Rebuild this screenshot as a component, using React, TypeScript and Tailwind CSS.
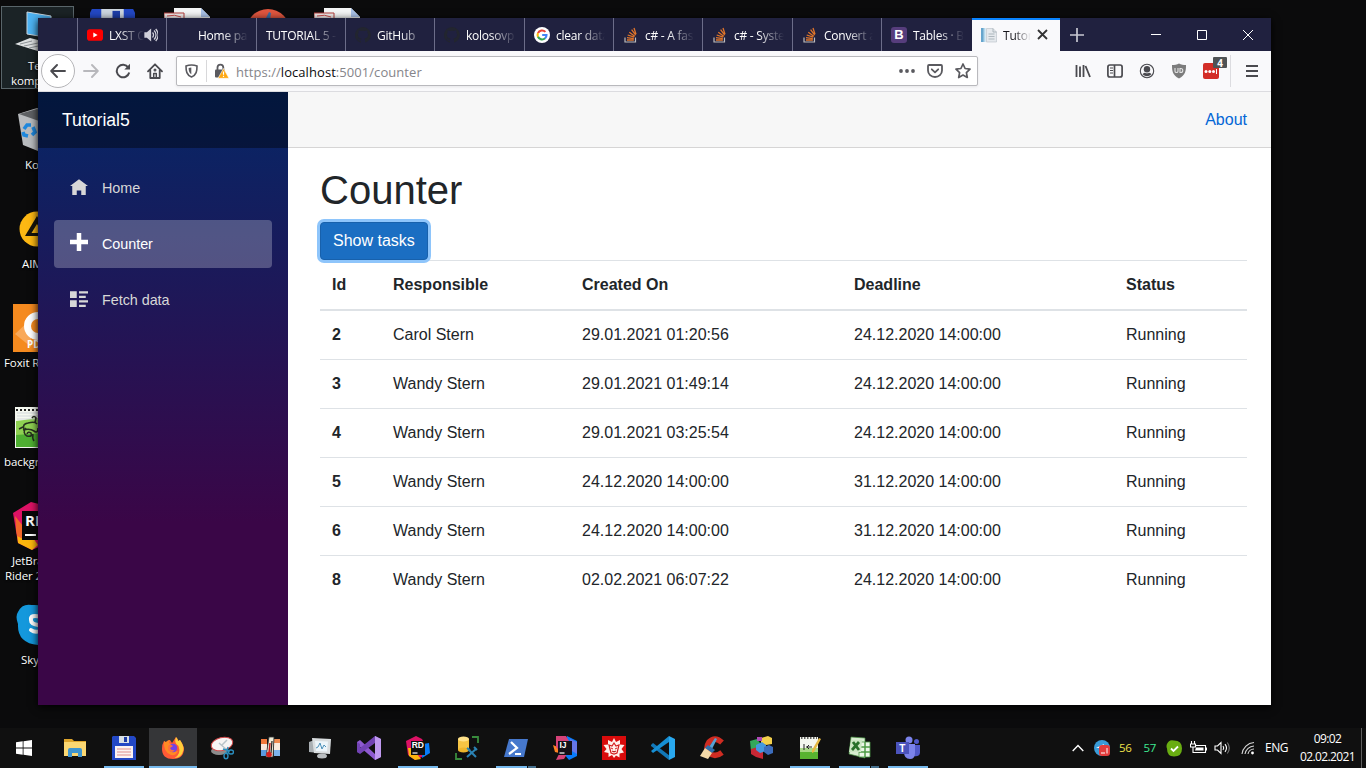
import type { ReactNode } from "react";

const UI = "font-['Open_Sans','Noto_Sans',sans-serif]";

/* ---------- Browser tabs ---------- */

function StackIcon() {
  return (
    <svg width="16" height="16" viewBox="0 0 16 16" fill="none">
      <path d="M2 10.5V15h10.5v-4.5" stroke="#bcbbbb" strokeWidth="1.2" />
      <path d="M4 13h6.800M4 10.700l6.800.9M4.700 8l6.500 2.200M6.300 5.200l5.500 4M8.600 2.700l4.100 5.500M11 1l2 6.300" stroke="#e0752a" strokeWidth="1.300" />
    </svg>
  );
}

function YouTubeIcon() {
  return (
    <svg width="16" height="16" viewBox="0 0 16 16">
      <rect y="2.3" width="16" height="11.4" rx="2.8" fill="#f00" />
      <path d="M6.3 5.5v5l4.3-2.5z" fill="#fff" />
    </svg>
  );
}

function GoogleIcon() {
  return (
    <svg width="16" height="16" viewBox="0 0 16 16" fill="none" strokeWidth="2.1">
      <circle cx="8" cy="8" r="8" fill="#fff" />
      <path d="M11.4 4.9A4.5 4.5 0 0 0 4 6.2" stroke="#ea4335" />
      <path d="M4 6.1a4.5 4.5 0 0 0 0 3.8" stroke="#fbbc05" />
      <path d="M4 9.8a4.5 4.5 0 0 0 7.1 1.5" stroke="#34a853" />
      <path d="M11 11.4A4.4 4.4 0 0 0 12.5 8H8.2" stroke="#4285f4" />
    </svg>
  );
}

function BootstrapIcon() {
  return (
    <span className="flex size-4 items-center justify-center rounded-[3px] bg-[#563d7c] font-['Liberation_Sans',sans-serif] text-[13px] leading-none font-bold text-white">
      B
    </span>
  );
}

function GitHubIcon() {
  return (
    <svg width="16" height="16" viewBox="0 0 16 16">
      <path
        fill="#22252f"
        d="M8 0a8 8 0 0 0-2.5 15.6c.4.1.5-.2.5-.4v-1.4c-2.2.5-2.7-1-2.7-1-.4-.9-.9-1.2-.9-1.2-.7-.5.1-.5.1-.5.8.1 1.2.8 1.2.8.7 1.3 1.9.9 2.3.7.1-.5.3-.9.5-1.1-1.8-.2-3.6-.9-3.6-4 0-.9.3-1.6.8-2.1-.1-.2-.4-1 .1-2.1 0 0 .7-.2 2.2.8a7.600 7.600 0 0 1 4 0c1.500-1 2.200-.8 2.200-.8.4 1.100.2 1.900.1 2.100.5.6.8 1.300.8 2.100 0 3.100-1.900 3.700-3.700 3.900.3.300.6.800.6 1.500v2.200c0 .2.1.500.6.400A8 8 0 0 0 8 0z"
      />
    </svg>
  );
}

function DocIcon() {
  return (
    <svg width="16" height="16" viewBox="0 0 16 16" className="shrink-0">
      <path d="M0 1h4v14H0z" fill="#66a5cd" />
      <path d="M2.500 1h2v14h-2z" fill="#b6d8ea" />
      <path d="M5.500 1.500H12L15.500 5v10H5.500z" fill="#e5e9ed" stroke="#bfc6cd" strokeWidth=".7" />
      <path d="M12 1.500V5h3.500M7.500 7h6M7.500 9.500h6M7.500 12h6" stroke="#a0a9b1" strokeWidth=".8" fill="none" />
    </svg>
  );
}

type TabData = { title: string; icon?: ReactNode; sound?: boolean; width: string };

const tabs: TabData[] = [
  { title: "LXST C", icon: <YouTubeIcon />, sound: true, width: "w-[89px]" },
  { title: "Home pa", icon: <span className="size-4" />, width: "w-[90px]" },
  { title: "TUTORIAL 5 -", width: "w-[89px]" },
  { title: "GitHub", icon: <GitHubIcon />, width: "w-[89px]" },
  { title: "kolosovp", icon: <GitHubIcon />, width: "w-[90px]" },
  { title: "clear data", icon: <GoogleIcon />, width: "w-[89px]" },
  { title: "c# - A fas", icon: <StackIcon />, width: "w-[89px]" },
  { title: "c# - Syste", icon: <StackIcon />, width: "w-[90px]" },
  { title: "Convert a", icon: <StackIcon />, width: "w-[89px]" },
  { title: "Tables · B", icon: <BootstrapIcon />, width: "w-[91px]" },
];

function Tab({ title, icon, sound, width }: TabData) {
  return (
    <div className={`flex h-full shrink-0 items-center border-l border-[#6c6d89] pr-2 pl-[9px] ${width}`}>
      {icon && <span className="mr-1.5 flex size-4 shrink-0">{icon}</span>}
      <span className="mt-0.5 min-w-0 flex-1 overflow-hidden [mask-image:linear-gradient(90deg,#000_calc(100%-26px),transparent_100%)] text-[12px] leading-4 tracking-[-0.25px] whitespace-nowrap text-white">
        {title}
      </span>
      {sound && (
        <svg width="14" height="14" viewBox="0 0 14 14" fill="none" stroke="#d0d0da" strokeWidth="1.300" className="shrink-0">
          <path d="M1 5h2l3.500-3v10L3 9H1z" fill="#d0d0da" />
          <path d="M8.500 4.500a3.500 3.500 0 0 1 0 5M10 2.500a6 6 0 0 1 0 9M11.700 1a8.500 8.500 0 0 1 0 12" />
        </svg>
      )}
    </div>
  );
}

function TabBar() {
  return (
    <div className="flex h-[33px] bg-[#20213f]">
      <div className="w-[39px] shrink-0" />
      {tabs.map((t) => (
        <Tab key={t.title} {...t} />
      ))}
      <div className="flex w-[88px] shrink-0 items-center bg-[#f9f9fb] pr-[12px] pl-[9px] shadow-[inset_0_2px_0_#0a84ff]">
        <DocIcon />
        <span className="mt-0.5 ml-[6px] min-w-0 flex-1 overflow-hidden [mask-image:linear-gradient(90deg,#000_40%,transparent_100%)] text-[12px] leading-4 tracking-[-0.2px] whitespace-nowrap text-[#15141a]">
          Tutor
        </span>
        <svg width="11" height="11" viewBox="0 0 11 11" stroke="#333" strokeWidth="1.800" className="ml-1.5 shrink-0">
          <path d="M1 1l9 9M10 1l-9 9" />
        </svg>
      </div>
      <div className="flex flex-1 items-center pl-[10px] text-white">
        <svg width="14" height="14" viewBox="0 0 14 14" stroke="#c8c8d2" strokeWidth="1.700">
          <path d="M7 0v14M0 7h14" />
        </svg>
        <div className="ml-auto flex items-center gap-9 pr-[18px]">
          <svg width="10" height="10" viewBox="0 0 10 10" stroke="currentColor"><path d="M0 4.500h10" /></svg>
          <svg width="10" height="10" viewBox="0 0 10 10" stroke="currentColor" fill="none"><path d="M.5.5h9v9h-9z" /></svg>
          <svg width="10" height="10" viewBox="0 0 10 10" stroke="currentColor"><path d="M0 0l10 10M10 0L0 10" /></svg>
        </div>
      </div>
    </div>
  );
}

/* ---------- Browser toolbar ---------- */

function Toolbar() {
  return (
    <div className="flex h-[41px] items-center border-b border-[#dcdce0] bg-[#f9f9fb] text-[#4a4a4f]">
      <span className="ml-[3px] flex size-[34px] shrink-0 items-center justify-center rounded-full border border-[#b5b5b8] bg-white">
        <svg width="16" height="16" viewBox="0 0 16 16" fill="none" stroke="currentColor" strokeWidth="1.900" strokeLinecap="round" strokeLinejoin="round">
          <path d="M15 8H1.500M7 2L1.200 8 7 14" />
        </svg>
      </span>
      <svg width="16" height="16" viewBox="0 0 16 16" className="ml-[8px] shrink-0" fill="none" stroke="#b8b8bc" strokeWidth="1.900" strokeLinecap="round" strokeLinejoin="round">
        <path d="M1 8h13.500M9 2l5.800 6L9 14" />
      </svg>
      <svg width="16" height="16" viewBox="0 0 16 16" className="ml-4 shrink-0" fill="none" stroke="currentColor" strokeWidth="2">
        <path d="M13.300 4.500A6.300 6.300 0 1 0 14.200 9.500" />
        <path d="M15 .8v5.700H9.300z" fill="currentColor" stroke="none" />
      </svg>
      <svg width="16" height="16" viewBox="0 0 16 16" className="ml-4 shrink-0" fill="none" stroke="currentColor" strokeWidth="1.800" strokeLinejoin="round" strokeLinecap="round">
        <path d="M1 8.300L8 1.300l7 7M3.300 7.500V15h9.400V7.500" />
        <path d="M6.700 15v-4.500h2.600V15" strokeWidth="1.500" />
        <circle cx="8" cy="7" r=".6" />
      </svg>
      <div className="ml-[13px] flex h-[30px] w-[802px] shrink-0 items-center rounded-[2px] border border-[#b9b9bd] bg-white pl-2 shadow-[0_1px_3px_rgba(0,0,0,0.08)]">
        <svg width="13" height="14" viewBox="0 0 13 14" fill="none" stroke="#5a5a5f" strokeWidth="1.600">
          <path d="M6.500 1C8.500 1 10.500 1.400 12 2c0 5-.5 9-5.500 11C1.500 11 1 7 1 2c1.500-.6 3.500-1 5.500-1z" />
          <path d="M6.300 3.500v6.800c-1.800-1.300-2.600-3-2.700-6.300z" fill="#5a5a5f" stroke="none" />
        </svg>
        <span className="ml-[8px] h-[22px] w-px bg-[#d8d8da]" />
        <svg width="16" height="16" viewBox="0 0 16 16" className="ml-[6px]">
          <path d="M4.500 7V4.600a2.900 2.900 0 0 1 5.800 0V7" fill="none" stroke="#5a5a5f" strokeWidth="1.800" />
          <rect x="2" y="6.500" width="10" height="8" rx="1" fill="#5a5a5f" />
          <path d="M10.500 5.500L16 15.300H5z" fill="#ffa70f" stroke="#fff" strokeWidth=".6" />
          <path d="M10.500 8.500v3.300M10.500 12.800v1.200" stroke="#fff" strokeWidth="1.200" />
        </svg>
        <span className="mt-[3px] ml-[7px] text-[13px] tracking-[0.06px] text-[#85858a]">
          https://<span className="text-[#0c0c0d]">localhost</span>:5001/counter
        </span>
        <div className="ml-auto flex items-center gap-3 pr-[6px] text-[#5a5a5f]">
          <svg width="16" height="16" viewBox="0 0 16 16" fill="currentColor">
            <circle cx="2" cy="8" r="1.900" /><circle cx="8" cy="8" r="1.900" /><circle cx="14" cy="8" r="1.900" />
          </svg>
          <svg width="16" height="16" viewBox="0 0 16 16" fill="none" stroke="currentColor" strokeWidth="1.800" strokeLinejoin="round" strokeLinecap="round">
            <path d="M2 2h12q1 0 1 1v4.500a7 6.500 0 0 1-14 0V3q0-1 1-1z" /><path d="M4.800 6.300L8 9.300l3.200-3" />
          </svg>
          <svg width="16" height="16" viewBox="0 0 16 16" fill="none" stroke="currentColor" strokeWidth="1.700" strokeLinejoin="round">
            <path d="M8 1l2.100 4.500 4.900.7-3.600 3.400.9 4.900L8 12.100l-4.300 2.400.9-4.900L1 6.200l4.900-.7z" />
          </svg>
        </div>
      </div>
      <div className="ml-auto flex h-full items-center">
        <div className="flex items-center gap-4 pr-[11px]">
          <svg width="16" height="16" viewBox="0 0 16 16" stroke="currentColor" strokeWidth="1.800">
            <path d="M1.500 2v12M5 3.500V14M8.500 2v12M10.500 3l4.500 11" />
          </svg>
          <svg width="16" height="16" viewBox="0 0 16 16" fill="none" stroke="currentColor" strokeWidth="1.700">
            <rect x=".9" y="2" width="14.200" height="12" rx="2" /><path d="M7.500 2v12" /><path d="M3 5h3M3 7.500h3M3 10h3" strokeWidth="1" />
          </svg>
          <svg width="16" height="16" viewBox="0 0 16 16" fill="none" stroke="currentColor">
            <circle cx="8" cy="8" r="6.700" strokeWidth="1.100" /><circle cx="8" cy="6.300" r="3.200" fill="currentColor" stroke="none" /><path d="M3.500 11.200Q5 9.800 6 9.800q2 1 4 0 1 0 2.500 1.400Q8 15.200 3.500 11.200z" fill="currentColor" stroke="none" />
          </svg>
          <svg width="16" height="16" viewBox="0 0 16 16">
            <path d="M8 .5C10 2 12.500 2 15 2c0 6-.5 10-7 13.500C1.500 12 1 8 1 2c2.500 0 5 0 7-1.500z" fill="#7c7c7c" />
            <path d="M4 5v3.200q0 1.300 1.500 1.300T7 8.200V5M9 5.500v4h.8a2 2 0 0 0 0-4z" fill="none" stroke="#e4e4e4" strokeWidth="1.100" />
          </svg>
          <span className="relative flex size-4 items-center justify-center rounded-[2px] bg-[#d32d27]">
            <svg width="14" height="5" viewBox="0 0 13 5" fill="#fff">
              <circle cx="1.500" cy="2.500" r="1.500" /><circle cx="5.300" cy="2.500" r="1.500" /><circle cx="9" cy="2.500" r="1.500" /><path d="M11.500 0h1v5h-1z" />
            </svg>
            <span className="absolute -top-[6px] -right-[8px] flex h-[11px] w-[14px] items-center justify-center rounded-[1px] bg-[#4f5355] text-[10px] leading-none font-bold text-white">4</span>
          </span>
        </div>
        <div className="flex h-8 items-center border-l border-[#dcdce0] pr-[13px] pl-[15px]">
          <svg width="12" height="12" viewBox="0 0 12 12" stroke="currentColor" strokeWidth="1.800"><path d="M0 1h12M0 6h12M0 11h12" /></svg>
        </div>
      </div>
    </div>
  );
}

/* ---------- Page ---------- */

const navItems = [
  { label: "Home", box: "0 -1 8 8", path: "M4 0l-4 3h1v4h2v-2h2v2h2v-4.03l1 .03-4-3z" },
  { label: "Counter", box: "0 0 8 8", path: "M3 0v3h-3v2h3v3h2v-3h3v-2h-3v-3h-2z", active: true },
  { label: "Fetch data", box: "0 -1 8 8", path: "M0 0v3h3v-3h-3zm4 0v1h4v-1h-4zm0 2v1h3v-1h-3zm-4 2v3h3v-3h-3zm4 0v1h4v-1h-4zm0 2v1h3v-1h-3z" },
];

function Sidebar() {
  return (
    <aside className="w-[250px] shrink-0 bg-[linear-gradient(180deg,#052767_0%,#3a0647_70%)]">
      <div className="flex h-14 items-center bg-black/40 pl-6 text-[17.6px] text-white">Tutorial5</div>
      <nav className="flex flex-col gap-2 px-4 pt-4">
        {navItems.map((n) => (
          <a
            key={n.label}
            className={`flex h-12 items-center rounded pl-4 text-[14.4px] ${n.active ? "bg-white/25 text-white" : "text-[#d7d7d7]"}`}
          >
            <svg width="18" height="18" viewBox={n.box} fill="currentColor" className="-mt-1 mr-[14px]">
              <path d={n.path} />
            </svg>
            <span className="pt-0.5 tracking-[-0.05px]">{n.label}</span>
          </a>
        ))}
      </nav>
    </aside>
  );
}

const rows = [
  ["2", "Carol Stern", "29.01.2021 01:20:56", "24.12.2020 14:00:00", "Running"],
  ["3", "Wandy Stern", "29.01.2021 01:49:14", "24.12.2020 14:00:00", "Running"],
  ["4", "Wandy Stern", "29.01.2021 03:25:54", "24.12.2020 14:00:00", "Running"],
  ["5", "Wandy Stern", "24.12.2020 14:00:00", "31.12.2020 14:00:00", "Running"],
  ["6", "Wandy Stern", "24.12.2020 14:00:00", "31.12.2020 14:00:00", "Running"],
  ["8", "Wandy Stern", "02.02.2021 06:07:22", "24.12.2020 14:00:00", "Running"],
];

const rowGrid = "grid grid-cols-[61px_189px_272px_272px_133px] items-center [&>span]:pl-3";

function Page() {
  return (
    <div className="flex h-[613px] bg-white font-['Liberation_Sans',Arial,sans-serif] text-base text-[#212529]">
      <Sidebar />
      <main className="flex-1">
        <div className="flex h-14 items-center justify-end border-b border-[#d6d5d5] bg-[#f7f7f7] pr-6 text-[#0366d6]">About</div>
        <div className="pt-[18px] pr-6 pl-8">
          <h1 className="mb-2 text-[40px] leading-[48px]">Counter</h1>
          <div className="flex h-[38px]">
            <button className="relative h-[38px] rounded border border-[#1861ac] bg-[#1b6ec2] px-3 text-white shadow-[0_0_0_3px_#8ec5fb]">
              Show tasks
            </button>
          </div>
          <div className={`h-[51px] border-t border-b-2 border-[#dee2e6] font-bold ${rowGrid}`}>
            <span>Id</span><span>Responsible</span><span>Created On</span><span>Deadline</span><span>Status</span>
          </div>
          {rows.map((r) => (
            <div key={r[0]} className={`h-[49px] border-b border-[#dee2e6] last:border-transparent ${rowGrid}`}>
              {r.map((c, i) => (
                <span key={i} className={i === 0 ? "font-bold" : ""}>{c}</span>
              ))}
            </div>
          ))}
        </div>
      </main>
    </div>
  );
}

/* ---------- Desktop ---------- */

function FloppyIcon({ size }: { size: number }) {
  return (
    <svg width={size} height={size} viewBox="0 0 24 24">
      <path d="M1 0h22l1 2v21l-1 1H1l-1-1V2z" fill="#2348c5" />
      <path d="M6 0h12v7H6z" fill="#cdd6e0" /><path d="M12 1h4v5h-4z" fill="#1d3da8" />
      <path d="M3 9.500h18V22H3z" fill="#fbf3f2" /><path d="M5 13h14M5 16h14M5 19h14" stroke="#dd8f8b" strokeWidth="1.200" />
    </svg>
  );
}

function PdfDoc() {
  return (
    <svg width="48" height="12" viewBox="0 0 48 12">
      <path d="M10 0h27l9 9v3H10z" fill="#f4f5f6" /><path d="M37 0l9 9H37z" fill="#a9c1e8" />
      <path d="M0 5h20v7H0z" fill="#f5eeee" stroke="#b23c3a" /><path d="M3 8q8-2 14 1" stroke="#d0504e" fill="none" />
    </svg>
  );
}

const label = "absolute text-[11.500px] leading-[15px] tracking-[-0.1px] whitespace-nowrap text-white [text-shadow:0_1px_2px_#000]";

function Desktop() {
  return (
    <div>
      <div className="absolute top-[6px] left-[1px] h-[83px] w-[73px] border border-[#59656a] bg-[#1b2326]" />
      <svg className="absolute top-[10px] left-[14px]" width="40" height="44" viewBox="0 0 40 44">
        <path d="M13 2l24 4v22l-24-4z" fill="#4db3f3" stroke="#c9d6df" /><path d="M1 34l15-6 20 5-9 9z" fill="#dfe2e3" /><path d="M6 34l12-3M10 36l14-3M15 38l14-3" stroke="#8d9296" />
      </svg>
      <span className={`${label} top-[58px] left-[28px]`}>Ten</span>
      <span className={`${label} top-[73px] left-[11px]`}>kompu</span>

      <div className="absolute top-[9px] left-[90px] h-3 overflow-hidden"><FloppyIcon size={45} /></div>
      <div className="absolute top-[8px] left-[164px]"><PdfDoc /></div>
      <svg className="absolute top-[9px] left-[246px]" width="44" height="44" viewBox="0 0 44 44">
        <circle cx="22" cy="22" r="22" fill="#e0563f" /><path d="M20 9l3-6 2 1-1 7z" fill="#3a6ea5" />
      </svg>
      <div className="absolute top-[8px] left-[314px]"><PdfDoc /></div>

      <svg className="absolute top-[108px] left-[18px]" width="38" height="44" viewBox="0 0 38 44">
        <path d="M0 6L19 0l19 6-6 32-12 5-15-6z" fill="#b9bcbf" /><path d="M1 6l18-5 18 5-16 7z" fill="#5e6164" /><path d="M21 13l16-7-5 32-12 5z" fill="#dcdee0" />
        <path d="M6 21l3-4 4 0M15 19l2 5-3 3M10 28l-4-1-1-3" stroke="#1f88dd" strokeWidth="3.600" fill="none" />
      </svg>
      <span className={`${label} top-[157px] left-[25px]`}>Kos</span>

      <svg className="absolute top-[211px] left-[19px]" width="36" height="36" viewBox="0 0 36 36">
        <circle cx="18" cy="18" r="17.500" fill="#fdb813" /><path d="M18 5L6 25h24z" fill="#17140c" /><path d="M18 13l-5.500 9h11z" fill="#fdb813" />
      </svg>
      <span className={`${label} top-[256px] left-[22px]`}>AIM</span>

      <svg className="absolute top-[304px] left-[13px]" width="48" height="48" viewBox="0 0 48 48">
        <path d="M0 0h48v48H0z" fill="#f58a1f" /><path d="M2 30L18 15v28z" fill="#f9a95a" /><circle cx="25" cy="22" r="10.500" fill="#f58a1f" stroke="#fff" strokeWidth="7" />
      </svg>
      <span className="absolute top-[338px] left-[27px] text-[10px] leading-3 font-bold text-white">PDF</span>
      <span className={`${label} top-[355px] left-[4px]`}>Foxit Re</span>

      <svg className="absolute top-[407px] left-[15px]" width="42" height="42" viewBox="0 0 42 42">
        <path d="M0 0h42v41H0z" fill="#f4f8f0" /><path d="M1 14Q16 12 42 8v32H1z" fill="#8fd152" /><path d="M1 28l41-3v15H1z" fill="#4faf32" />
        <path d="M2 6h40M2 9h40M2 12h30" stroke="#c5cdd6" strokeWidth=".7" />
        <path d="M1 3h40" stroke="#222" strokeWidth="2" strokeDasharray="2 2" />
        <path d="M4 22l4-2M17 11q2-3 4 0l-1 5M9 22q-2-5 4-6 7-2 9 1M8 23q7-2 11 1t4-3M11 21q-4 5 1 8 6 1 4-3-3-2-4 1M18 27q-1 4 1 7" stroke="#26301e" strokeWidth="1.600" fill="none" />
      </svg>
      <span className={`${label} top-[454px] left-[4px]`}>backgro</span>

      <svg className="absolute top-[502px] left-[13px]" width="48" height="48" viewBox="0 0 48 48">
        <path d="M0 11L18 0l12 3v40l-11 5-14-7z" fill="#dd1265" /><path d="M3 24l8-1 14 20-6 5-14-7z" fill="#fdb60d" /><path d="M2 14l8 10v13L4 34z" fill="#f2672a" /><path d="M9 9h30v29H9z" fill="#090909" />
        <path d="M12 33h11" stroke="#fff" strokeWidth="2" />
      </svg>
      <span className="absolute top-[512px] left-[25px] text-[15px] leading-4 font-bold text-white">RD</span>
      <span className={`${label} top-[553px] left-[12px]`}>JetBra</span>
      <span className={`${label} top-[568px] left-[5px]`}>Rider 20</span>

      <svg className="absolute top-[604px] left-[16px]" width="42" height="42" viewBox="0 0 42 42">
        <path d="M2 8Q6-1 16 1 42 0 41 20 44 42 22 41 1 39 2 20-1 12 2 8z" fill="#1498dc" />
        <path d="M25 13q-11-3-10 3 0 4 7 5 6 2 2 6-5 2-9-1" stroke="#fff" strokeWidth="4" fill="none" strokeLinecap="round" />
      </svg>
      <span className={`${label} top-[652px] left-[21px]`}>Skype</span>
    </div>
  );
}

/* ---------- Taskbar ---------- */

const code = "font-['Liberation_Sans',sans-serif] font-bold";

const apps: { name: string; open?: boolean; active?: boolean; stacked?: boolean; icon: ReactNode }[] = [
  { name: "explorer", icon: <><path d="M1 3h8l2 2h12v15H1z" fill="#dea52c" /><path d="M1 6h22v14H1z" fill="#fbd772" /><path d="M5 21v-7q0-2 2-2h10q2 0 2 2v7h-4v-4H9v4z" fill="#3f95cf" /></> },
  { name: "commander", open: true, icon: <><path d="M1 0h21l2 2v22H0V1z" fill="#2348c5" /><path d="M7 0h10v7H7z" fill="#d8e0e6" /><path d="M12 1h3v5h-3z" fill="#1d3da8" /><path d="M3 10h18v12H3z" fill="#fbf3f2" /><path d="M5 13h14M5 16h14M5 19h14" stroke="#dd8f8b" strokeWidth="1.200" /></> },
  {
    name: "firefox", open: true, active: true,
    icon: (
      <>
        <path d="M3 5q1 1 2 1 2-2 4-2l2 3 4-6q2 2 2 4l2-1q3 4 4 8 0 11-11 11T1 13q0-5 2-8z" fill="#ff5a36" />
        <path d="M15 1q2 2 2 4l2-1q4 6 3.500 10-2 8-9 8 7-4 4-12-5-3-2.500-9z" fill="#ffcf3a" />
        <path d="M3 5q1 1 2 1 2-2 4-2l-1 3 4 2-3 3q2 5 8 3-2 5-7 4-8-3-7-14z" fill="#ff8a24" />
        <circle cx="12" cy="12" r="4.200" fill="#7542e5" /><path d="M7 10q3-2 5 0l-3 2q1 3 5 2-3 4-7 0z" fill="#ff7139" />
      </>
    ),
  },
  { name: "snip", icon: <><ellipse cx="9" cy="15" rx="8" ry="4" fill="#8c8c8c" /><ellipse cx="12" cy="8" rx="11" ry="6.500" fill="#f7f4f4" stroke="#d24b4b" transform="rotate(-14 12 8)" /><path d="M12 9l5-5M9 7l8 7" stroke="#b9c3c9" strokeWidth="1.500" /><g fill="none" stroke="#2b8fc0" strokeWidth="1.400"><ellipse cx="16" cy="20" rx="2" ry="2.800" /><ellipse cx="21" cy="16" rx="2.500" ry="2" /><path d="M13 13l7 2M18 11l-1.500 7" /></g></> },
  { name: "temps", icon: <><path d="M2 3h6v17H2z" fill="#f0773c" /><path d="M2 8h6v6H2z" fill="#f7e5dc" /><path d="M2 14h6v6H2z" fill="#5a9ae0" /><path d="M15 3h6v17h-6z" fill="#f08c50" /><path d="M15 7h6v8h-6z" fill="#f8ecdf" /><path d="M15 14h6v6h-6z" fill="#7db4ec" /><path d="M10 1h5l-1 20H7z" fill="#f0efdc" stroke="#333" strokeWidth=".8" /><path d="M13 5l-1 12" stroke="#222" strokeWidth="1.200" /><path d="M11 7l-1 10" stroke="#c31d1d" strokeWidth="1.500" /><circle cx="10" cy="18.500" r="2.800" fill="#d32121" /></> },
  { name: "monitor", icon: <><path d="M1 6l8-3 2 14-10-1z" fill="#a9afb3" /><path d="M4 2l19 1-1 15-16-1z" fill="#d9dddf" /><path d="M7 5l13 .5-1 10-11-.5z" fill="#edf5fa" /><path d="M8 12l2-1 2-4 2 6 2-4 2 2" stroke="#4b8fb8" fill="none" /><ellipse cx="14" cy="20" rx="5" ry="2.500" fill="#b9bdc0" /></> },
  { name: "visual-studio", icon: <><path d="M0 6l3-2 15 14V0l6 3v18l-6 3L3 11v6l-3-1z" fill="#8e5ad0" /><path d="M18 0l6 3v18l-6 3z" fill="#c09af0" /><path d="M0 16l3 2L18 7V0L3 12V8L0 6z" fill="#7243b4" /></> },
  { name: "rider", open: true, icon: <><path d="M0 5L10 0l6 3 5 9-5 9-7 3-7-5z" fill="#dd1265" /><path d="M2 12l4 0 9 11-6 1-6-4z" fill="#fdb60d" /><path d="M17 8l6-1 1 10-8 5z" fill="#087cfa" /><path d="M5 5h14v14H5z" fill="#101010" /><text x="5.700" y="12" fontSize="8.500" fill="#fff" className={code}>RD</text><path d="M6.500 17h5" stroke="#fff" strokeWidth="1.200" /></> },
  { name: "database", icon: <><path d="M3 3h11v11H3z" fill="#f6c544" /><ellipse cx="8.500" cy="3" rx="5.500" ry="2.500" fill="#ffe289" /><ellipse cx="8.500" cy="14" rx="5.500" ry="2.500" fill="#eeb62b" /><path d="M17 1h6v6M1 17v6h6" fill="none" stroke="#398c3d" strokeWidth="1.800" /><path d="M13 13l8 8M21 13l-9 8M12 12l3 2M19 11l3 3" stroke="#2b82b3" strokeWidth="2" /></> },
  { name: "powershell", open: true, stacked: true, icon: <><path d="M5 3h19l-4 18H0z" fill="#4678cc" /><path d="M7 6l6 6-8 6" fill="none" stroke="#fff" strokeWidth="2.200" /><path d="M11 18h6" stroke="#fff" strokeWidth="2" /></> },
  { name: "intellij", icon: <><path d="M14 0l10 5v15l-8 4-5-6z" fill="#087cfa" /><path d="M17 3l7 3v12l-5-3z" fill="#6676e8" /><path d="M0 9l7 3-1 5-4-1z" fill="#fd8224" /><path d="M3 0h10l6 10-8 13-8 1 4-8-4-5z" fill="#d64278" /><path d="M5 5h14v14H5z" fill="#141018" /><text x="6.500" y="12" fontSize="8.500" fill="#fff" className={code}>IJ</text><path d="M6.500 17h5" stroke="#fff" strokeWidth="1.200" /></> },
  { name: "wolfram", icon: <><path d="M0 0h24v24H0z" fill="#d90b0b" /><path d="M12 2l2 4 4-2v4.500l4.500.5-3 4 2.500 3.500-4.500 1 0 4-3.500-2L12 22l-2-3-3.500 2 0-4-4.500-1L4.500 13l-3-4 4.500-.5V4l4 2z" fill="#fff0eb" /><path d="M7 9l3 1 2-3 2 3 3-1-1 4-1 4-3 1-3-1-1-4z" fill="none" stroke="#d51e1e" strokeWidth="1.200" /><path d="M9 12l2 1M15 12l-2 1M10 15l2 1 2-1" stroke="#d51e1e" /></> },
  { name: "vscode", icon: <><path d="M0 9l2-2 17 13-1 4L0 10z" fill="#1278b8" /><path d="M18 0v6L2 17l-2-2z" fill="#168fd4" /><path d="M18 0l6 3v18l-6 3z" fill="#29a8ee" /></> },
  { name: "ccleaner", icon: <><path d="M22 6.500Q15 0 9 6q-4 6 0 11 6 5 13-.5" fill="none" stroke="#cf2c22" strokeWidth="5.500" /><path d="M15 2l2 1-5 10-3-2z" fill="#55a2d6" /><path d="M8 9l7 5-3 3-7-5z" fill="#2f70ac" /><path d="M5 12l7 5-4 6-8-3z" fill="#f4d9a8" /></> },
  { name: "cubes", icon: <><path d="M1 5l7-2 3 4-2 6-7 2z" fill="#33a85b" /><path d="M12 2l7-2 4 2v6l-6 1-5-2z" fill="#f3d04c" /><path d="M8 1h5v4H8z" fill="#ae4bb5" /><path d="M2 13l7-2 5 4v8L7 21l-5-3z" fill="#c82735" /><path d="M7 9l6-3 4 3v6l-6 2-4-3z" fill="#4498e0" /><path d="M15 11l5-2 4 2v6l-5 2-4-3z" fill="#3c6dbd" /></> },
  { name: "notepad", open: true, icon: <><path d="M2 1h18v22H2z" fill="#f4f6ef" /><path d="M2 14h18v9H2z" fill="#58b330" /><path d="M2 12h18v4H2z" fill="#a8d886" /><path d="M3 2h16" stroke="#333" strokeWidth="1.500" strokeDasharray="1.500 1.500" /><path d="M6 8v6M8 11h6M11 9l-2 2 2 2" stroke="#222" fill="none" /><path d="M21 2l2 1-7 13-2 1 0-3z" fill="#e5b842" /></> },
  { name: "excel", open: true, stacked: true, icon: <><path d="M4 1l14 1v20L2 18z" fill="#d8edd1" stroke="#438c3d" strokeWidth=".7" /><path d="M12 6h11v15H12z" fill="#ecf5e8" stroke="#4a9544" strokeWidth=".8" /><path d="M12 11h11M12 16h11M18 6v15" stroke="#4d9a46" strokeWidth="1.500" /><path d="M4 4h11l-1 12H2z" fill="#cce6c4" /><path d="M6 6l6 8M12 6l-7 8" stroke="#28702a" strokeWidth="2.800" /></> },
  { name: "teams", open: true, icon: <><circle cx="13" cy="4" r="3.500" fill="#7b83eb" /><circle cx="20.500" cy="5.500" r="2.500" fill="#5059c9" /><path d="M16 9h8v8q-1 4-6 3z" fill="#5059c9" /><path d="M8 8h11v9q0 6-5 6-6 0-6-7z" fill="#7b83eb" /><path d="M0 6h13v12H0z" fill="#4b53bc" /><text x="3.200" y="15.500" fontSize="10" fill="#fff" className={code}>T</text></> },
];

function Taskbar() {
  return (
    <div className="absolute right-0 bottom-0 left-0 flex h-10 items-center bg-[#101010] text-white">
      <div className="flex w-[51px] shrink-0 items-center pl-4">
        <svg width="16" height="16" viewBox="0 0 16 16" fill="#fff">
          <path d="M0 2.200L6.700 1.300v6.200H0zM7.500 1.200L16 0v7.500H7.500zM0 8.400h6.700v6.300L0 13.800zM7.500 8.400H16V16l-8.500-1.200z" />
        </svg>
      </div>
      <div className="flex h-full gap-px">
        {apps.map((a) => (
          <div key={a.name} className={`flex w-12 flex-col items-center justify-between pt-2 ${a.active ? "bg-[#353638]" : ""}`}>
            <svg width="24" height="24" viewBox="0 0 24 24">{a.icon}</svg>
            {a.open && (
              <span className={`flex h-0.5 justify-end bg-[#76b9ed] ${a.active ? "w-12" : "w-10"}`}>
                {a.stacked && <span className="h-full w-[9px] border-l border-[#101010] bg-[#47718f]" />}
              </span>
            )}
          </div>
        ))}
      </div>
      <div className="ml-auto flex h-full items-center">
        <svg width="12" height="8" viewBox="0 0 12 8" fill="none" stroke="#fff" strokeWidth="1.400"><path d="M.7 7L6 1.500 11.300 7" /></svg>
        <svg width="16" height="16" viewBox="0 0 16 16" className="ml-[10px]">
          <circle cx="8" cy="8" r="8" fill="#3a9bd8" /><path d="M2 8l8-4-1 4z" fill="#fff" /><rect x="5" y="5" width="11" height="11" rx="3" fill="#e23c3c" /><path d="M7 13h4M13 8v5.500" stroke="#fff" />
        </svg>
        <span className="ml-[9px] text-[11.500px] leading-none tracking-[-0.3px] text-[#efe14a]">56</span>
        <span className="ml-[12px] text-[11.500px] leading-none tracking-[-0.3px] text-[#3eea92]">57</span>
        <svg width="17" height="17" viewBox="0 0 17 17" className="ml-[10px]">
          <path d="M1 4Q3-1 8 .5q8 0 8 8t-8 8q-7 0-7-8Q0 6 1 4z" fill="#69ad12" /><path d="M5 8.500l2.500 2.500 4.500-4.500" fill="none" stroke="#fff" strokeWidth="1.800" />
        </svg>
        <svg width="17" height="14" viewBox="0 0 17 14" className="ml-[7px]" fill="none" stroke="#fff">
          <path d="M1.500 0v3M4.500 0v3M.5 3h5v3h-5zM3 6v6M6 4.500h9.500v7H3.500" strokeWidth="1.100" /><path d="M6 6.500h7.500v3H5z" fill="#fff" stroke="none" /><path d="M16.500 6.500v3" />
        </svg>
        <svg width="17" height="16" viewBox="0 0 17 16" className="ml-[7px]" fill="none" stroke="#fff" strokeWidth="1.100">
          <path d="M1 6h2.500L7 2.500v11L3.500 10H1zM9 6q1.500 2 0 4M11 4.200q3 3.800 0 7.600" /><path d="M13.300 2.500q4 5.500 0 11" stroke="#777" />
        </svg>
        <svg width="14" height="14" viewBox="0 0 14 14" className="ml-[10px]" fill="none" stroke="#d8d8d8" strokeWidth="1.100">
          <path d="M1 13A13 13 0 0 1 13 1.500M4 13a9.500 9.500 0 0 1 9-8M7 13a6 6 0 0 1 6-5" /><circle cx="11.500" cy="12" r="1.400" fill="#fff" stroke="none" />
        </svg>
        <span className="ml-[10px] w-[23px] text-[12px] leading-none tracking-[-0.5px]">ENG</span>
        <div className="mr-[6px] ml-[12px] flex w-[55px] flex-col items-center text-[12px] leading-[18px] tracking-[-0.6px]">
          <span>09:02</span><span>02.02.2021</span>
        </div>
        <span className="mr-[4px] h-full w-px bg-[#5f5f5f]" />
      </div>
    </div>
  );
}

export default function App() {
  return (
    <div className={`relative h-[768px] w-[1366px] overflow-hidden bg-[#0b0b0c] ${UI}`}>
      <Desktop />
      <div className="absolute top-[18px] left-[38px] w-[1233px] overflow-hidden shadow-[0_2px_8px_#000]">
        <TabBar />
        <Toolbar />
        <Page />
      </div>
      <Taskbar />
    </div>
  );
}
